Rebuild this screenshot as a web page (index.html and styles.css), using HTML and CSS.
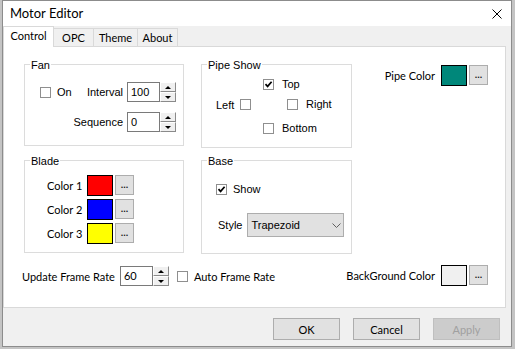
FILE: index.html
```html
<!DOCTYPE html>
<html lang="en">
<head>
    <meta charset="UTF-8">
    <meta name="viewport" content="width=device-width, initial-scale=1.0">
    <title>Motor Editor</title>
    <link rel="stylesheet" href="styles.css">
</head>
<body>
    <div class="window">
        <div class="titlebar">
            <span class="title">Motor Editor</span>
            <svg class="close" width="10" height="10" viewBox="0 0 10 10">
                <path d="M0.5 0.5L9.5 9.5M9.5 0.5L0.5 9.5" stroke="#000" stroke-width="1" fill="none"/>
            </svg>
        </div>

        <div class="tabs">
            <div class="tab active" style="width: 51px;">Control</div>
            <div class="tab" style="width: 41px;">OPC</div>
            <div class="tab" style="width: 45px;">Theme</div>
            <div class="tab" style="width: 41px;">About</div>
        </div>

        <div class="page">
            <div class="layout">
                <!-- Fan -->
                <div class="group fan">
                    <span class="group-title">Fan</span>
                    <div class="fan-grid">
                        <label class="check classic"><span class="box"></span>On</label>
                        <span class="lbl-r classic">Interval</span>
                        <div class="spin">
                            <span class="spin-val classic">100</span>
                            <span class="spin-btns"><span class="up"></span><span class="down"></span></span>
                        </div>
                        <span class="lbl-r classic seq">Sequence</span>
                        <div class="spin">
                            <span class="spin-val classic">0</span>
                            <span class="spin-btns"><span class="up"></span><span class="down"></span></span>
                        </div>
                    </div>
                </div>

                <!-- Pipe Show -->
                <div class="group pipe">
                    <span class="group-title">Pipe Show</span>
                    <div class="pipe-rows classic">
                        <div class="prow top">
                            <label class="check"><span class="box"><svg width="9" height="9" viewBox="0 0 9 9"><path d="M1.5 4.2L3.6 6.4L7.6 1.8" stroke="#000" stroke-width="1.7" fill="none"/></svg></span>Top</label>
                        </div>
                        <div class="prow mid">
                            <span class="left-lbl">Left</span>
                            <span class="box"></span>
                            <label class="check right-check"><span class="box"></span>Right</label>
                        </div>
                        <div class="prow bot">
                            <label class="check"><span class="box"></span>Bottom</label>
                        </div>
                    </div>
                </div>

                <!-- Pipe Color -->
                <div class="color-field">
                    <span class="field-lbl">Pipe Color</span>
                    <span class="swatch teal"></span>
                    <span class="pick">...</span>
                </div>

                <!-- Blade -->
                <div class="group blade">
                    <span class="group-title">Blade</span>
                    <div class="color-list">
                        <div class="color-row">
                            <span class="name">Color 1</span>
                            <span class="swatch red"></span>
                            <span class="pick">...</span>
                        </div>
                        <div class="color-row">
                            <span class="name">Color 2</span>
                            <span class="swatch blue"></span>
                            <span class="pick">...</span>
                        </div>
                        <div class="color-row">
                            <span class="name">Color 3</span>
                            <span class="swatch yellow"></span>
                            <span class="pick">...</span>
                        </div>
                    </div>
                </div>

                <!-- Base -->
                <div class="group base">
                    <span class="group-title">Base</span>
                    <div class="base-show classic">
                        <label class="check"><span class="box"><svg width="9" height="9" viewBox="0 0 9 9"><path d="M1.5 4.2L3.6 6.4L7.6 1.8" stroke="#000" stroke-width="1.7" fill="none"/></svg></span>Show</label>
                    </div>
                    <div class="style-row classic">
                        <span>Style</span>
                        <div class="select">
                            <span>Trapezoid</span>
                            <svg width="9" height="5" viewBox="0 0 9 5"><path d="M0.5 0.5L4.5 4.5L8.5 0.5" stroke="#606060" stroke-width="1" fill="none"/></svg>
                        </div>
                    </div>
                </div>
                <div></div>
            </div>

            <div class="bottom-row">
                <span>Update Frame Rate</span>
                <div class="spin frame-spin">
                    <span class="spin-val">60</span>
                    <span class="spin-btns"><span class="up"></span><span class="down"></span></span>
                </div>
                <label class="check auto-check"><span class="box"></span>Auto Frame Rate</label>
                <div class="color-field bg-field">
                    <span class="field-lbl">BackGround Color</span>
                    <span class="swatch light"></span>
                    <span class="pick">...</span>
                </div>
            </div>
        </div>

        <div class="footer">
            <button class="btn">OK</button>
            <button class="btn">Cancel</button>
            <button class="btn" disabled>Apply</button>
        </div>
    </div>
</body>
</html>
```

FILE: styles.css
```css
* {
    box-sizing: border-box;
}
body {
    margin: 0;
    background: #c4c4c4;
    font-family: Lato, "Liberation Sans", sans-serif;
    font-size: 11px;
    color: #000;
}
.classic {
    font-family: "Liberation Sans", Arial, sans-serif;
}
.window {
    width: 510px;
    height: 347px;
    margin-left: 2px;
    border: 1px solid #8c8c8c;
    background: #f0f0f0;
    display: flex;
    flex-direction: column;
}
.titlebar {
    height: 25px;
    flex: none;
    background: #fff;
    display: flex;
    align-items: center;
    padding-left: 7px;
}
.title {
    font-size: 13px;
    padding-bottom: 2px;
}
.close {
    margin-left: auto;
    margin-right: 9px;
}
.tabs {
    height: 20px;
    flex: none;
    display: flex;
    align-items: flex-end;
}
.tab {
    height: 18px;
    margin-left: -1px;
    border: 1px solid #d9d9d9;
    border-bottom: none;
    background: #f0f0f0;
    text-align: center;
    line-height: 13px;
    padding-top: 2px;
}
.tab.active {
    height: 21px;
    margin-left: 0;
    margin-bottom: -1px;
    background: #fff;
    position: relative;
    z-index: 1;
}
.page {
    width: 503px;
    height: 262px;
    flex: none;
    background: #fff;
    border: 1px solid #d9d9d9;
    padding: 17px 17px 0 20px;
}
.layout {
    display: grid;
    grid-template-columns: 160px 151px 1fr;
    grid-template-rows: 84px 94px;
    column-gap: 17px;
    row-gap: 12px;
}
.group {
    position: relative;
    border: 1px solid #dcdcdc;
    align-self: start;
}
.fan { height: 82px; }
.pipe { height: 84px; }
.blade { height: 93px; }
.base { height: 94px; }
.group-title {
    position: absolute;
    top: -6px;
    left: 5px;
    padding: 0 1px;
    background: #fff;
    font-family: "Liberation Sans", Arial, sans-serif;
    line-height: 13px;
}

/* checkbox */
.check {
    display: flex;
    align-items: center;
    gap: 7px;
    line-height: 13px;
}
.box {
    width: 11px;
    height: 11px;
    flex: none;
    border: 1px solid #8f8f8f;
    background: #fff;
    display: flex;
    align-items: center;
    justify-content: center;
}
.box svg {
    display: block;
}

/* fan */
.fan-grid {
    display: grid;
    grid-template-columns: 40px 43px 54px;
    grid-template-rows: 20px 20px;
    row-gap: 10px;
    align-items: center;
    padding: 17px 0 0 15px;
}
.fan-grid .check {
    gap: 6px;
}
.lbl-r {
    text-align: right;
}
.seq {
    grid-column: 1 / 3;
}
.spin {
    display: flex;
    height: 20px;
    margin-left: 4px;
}
.spin-val {
    width: 33px;
    border: 1px solid #7a7a7a;
    background: #fff;
    padding-left: 3px;
    line-height: 18px;
}
.spin-btns {
    width: 16px;
    display: flex;
    flex-direction: column;
}
.spin-btns span {
    flex: 1;
    background: #f0f0f0;
    border: 1px solid;
    border-color: #fff #8a8a8a #8a8a8a #fff;
    display: flex;
    align-items: center;
    justify-content: center;
}
.spin-btns .up::after,
.spin-btns .down::after {
    content: "";
    border-left: 3px solid transparent;
    border-right: 3px solid transparent;
}
.spin-btns .up::after {
    border-bottom: 3px solid #000;
}
.spin-btns .down::after {
    border-top: 3px solid #000;
}

/* pipe show */
.pipe-rows {
    padding-top: 13px;
}
.prow {
    display: flex;
    align-items: center;
    height: 13px;
}
.prow.top {
    padding-left: 61px;
}
.prow.mid {
    margin-top: 7px;
    padding-left: 14px;
}
.prow.bot {
    margin-top: 11px;
    padding-left: 61px;
}
.prow .check {
    gap: 8px;
}
.left-lbl {
    width: 24px;
}
.right-check {
    margin-left: 36px;
}

/* colour pickers */
.color-field {
    display: flex;
    justify-content: flex-end;
    align-items: center;
    align-self: start;
    margin-top: 1px;
}
.field-lbl {
    margin-right: 6px;
}
.swatch {
    width: 26px;
    height: 21px;
    flex: none;
    border: 1px solid #000;
}
.teal { background: #00877a; }
.red { background: #ff0000; }
.blue { background: #0000ff; }
.yellow { background: #ffff00; }
.light { background: #f0f0f0; }
.pick {
    width: 19px;
    height: 20px;
    flex: none;
    align-self: flex-start;
    margin-left: 2px;
    background: #e1e1e1;
    border: 1px solid #adadad;
    font-family: "Liberation Sans", Arial, sans-serif;
    font-weight: bold;
    font-size: 9px;
    line-height: 9px;
    color: #1a1a1a;
    display: flex;
    justify-content: center;
    align-items: flex-end;
    padding: 0 0 4px 0;
}
.color-list {
    padding: 14px 0 0 22px;
    display: flex;
    flex-direction: column;
    gap: 3px;
}
.color-row {
    display: flex;
    align-items: center;
    height: 21px;
}
.color-row .name {
    width: 40px;
}

/* base */
.base-show {
    padding: 22px 0 0 14px;
}
.base-show .check {
    gap: 6px;
}
.style-row {
    display: flex;
    align-items: center;
    gap: 5px;
    margin-top: 17px;
    padding-left: 16px;
}
.select {
    width: 97px;
    height: 24px;
    background: #e1e1e1;
    border: 1px solid #adadad;
    display: flex;
    align-items: center;
    padding: 0 2px 0 3px;
}
.select svg {
    margin-left: auto;
}

/* bottom row */
.bottom-row {
    display: flex;
    align-items: center;
    height: 22px;
    margin-top: 11px;
    margin-left: -2px;
}
.frame-spin {
    margin-left: 5px;
}
.auto-check {
    margin-left: 8px;
    gap: 6px;
}
.bg-field {
    margin-left: auto;
    margin-top: 0;
}

/* footer */
.footer {
    flex: 1;
    display: flex;
    justify-content: flex-end;
    gap: 13px;
    padding: 10px 11px 0 0;
}
.btn {
    width: 67px;
    height: 22px;
    background: #e1e1e1;
    border: 1px solid #adadad;
    font-family: Lato, "Liberation Sans", sans-serif;
    font-size: 11px;
    color: #000;
    padding: 0;
}
.btn:disabled {
    background: #cccccc;
    border-color: #bfbfbf;
    color: #a0a0a0;
}
```
